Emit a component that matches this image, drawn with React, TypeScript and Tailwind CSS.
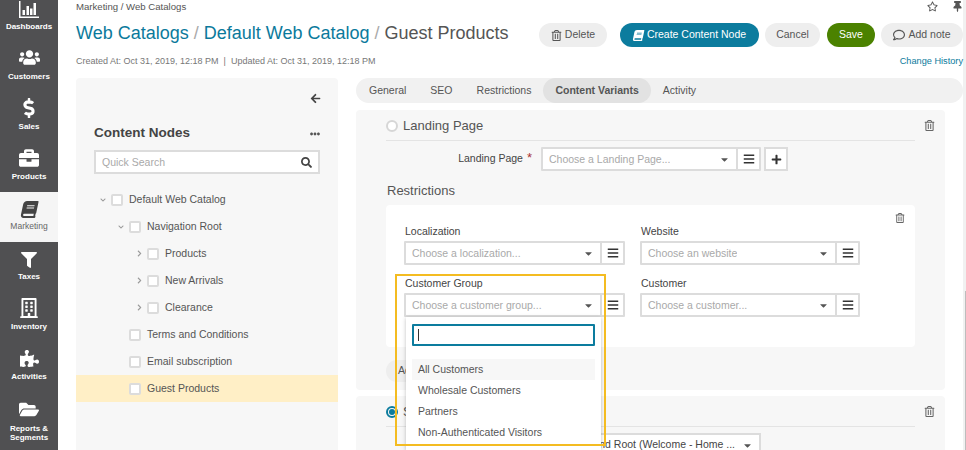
import React from "react";
import {
  FaArrowLeft,
  FaBars,
  FaBook,
  FaBriefcase,
  FaCaretDown,
  FaChevronDown,
  FaChevronRight,
  FaDollarSign,
  FaEllipsisH,
  FaFilter,
  FaFolderOpen,
  FaPlus,
  FaPuzzlePiece,
  FaRegBuilding,
  FaRegComment,
  FaRegStar,
  FaRegTrashAlt,
  FaSearch,
  FaThumbtack,
  FaUsers,
} from "react-icons/fa";

const ChartIcon = ({ className }: { className?: string }) => (
  <svg viewBox="0 0 20 17" fill="currentColor" className={className}>
    <path d="M0 0h1.5v15.5H20V17H0z" />
    <path d="M3.5 9H6v5H3.5zM7.5 5H10v9H7.5zM11 7.5h2.5V14H11zM14.5 2H17v12h-2.5z" />
  </svg>
);

const BookIcon = ({ className }: { className?: string }) => <FaBook className={`-skew-x-12 ${className}`} />;

const navItems = [
  { label: "Dashboards", icon: ChartIcon, size: "w-5 h-[17px]" },
  { label: "Customers", icon: FaUsers, size: "text-[21px]" },
  { label: "Sales", icon: FaDollarSign, size: "text-[20px]" },
  { label: "Products", icon: FaBriefcase, size: "text-[20px]" },
  { label: "Marketing", icon: BookIcon, size: "text-[17px] text-[#444]", active: true },
  { label: "Taxes", icon: FaFilter, size: "text-[16px]" },
  { label: "Inventory", icon: FaRegBuilding, size: "text-[20px]" },
  { label: "Activities", icon: FaPuzzlePiece, size: "text-[19px]" },
];

const treeRows = [
  { label: "Default Web Catalog", indent: "pl-[35px]", arrow: "down" },
  { label: "Navigation Root", indent: "pl-[53px]", arrow: "down" },
  { label: "Products", indent: "pl-[71px]", arrow: "right" },
  { label: "New Arrivals", indent: "pl-[71px]", arrow: "right" },
  { label: "Clearance", indent: "pl-[71px]", arrow: "right" },
  { label: "Terms and Conditions", indent: "pl-[53px]" },
  { label: "Email subscription", indent: "pl-[53px]" },
  { label: "Guest Products", indent: "pl-[53px]", selected: true },
];

const tabs = ["General", "SEO", "Restrictions", "Content Variants", "Activity"];
const groups = ["All Customers", "Wholesale Customers", "Partners", "Non-Authenticated Visitors"];

const Sidebar = () => (
  <aside className="w-[58px] shrink-0 bg-[#505052] text-white -mt-2 h-[458px] overflow-hidden">
    {navItems.map((item) => {
      const Icon = item.icon;
      return (
        <div
          key={item.label}
          className={`h-[50px] flex flex-col items-center justify-end pb-[10px] ${item.active ? "bg-[#f5f5f5]" : ""}`}
        >
          <Icon className={`${item.size} mb-[3px]`} />
          <span className={`leading-[11px] ${item.active ? "text-[8.5px] text-[#666]" : "text-[8px] font-bold"}`}>{item.label}</span>
        </div>
      );
    })}
    <div className="h-[50px] flex flex-col items-center pt-[8px]">
      <FaFolderOpen className="text-[20px] mb-[5px]" />
      <span className="text-[8px] leading-[9px] font-bold text-center">
        Reports &amp;
        <br />
        Segments
      </span>
    </div>
  </aside>
);

const Select = ({ placeholder, width }: { placeholder: string; width: string }) => (
  <div className={`${width} h-6 flex bg-[#dcdcdc] p-[2px] gap-[2px] rounded-[1px]`}>
    <div className="flex-1 min-w-0 bg-white flex items-center justify-between px-[6px]">
      <span className="pt-px text-[10.5px] text-[#a9a9a9] truncate">{placeholder}</span>
      <FaCaretDown className="text-[11px] text-[#555] shrink-0" />
    </div>
    <div className="w-[21px] bg-white flex items-center justify-center">
      <FaBars className="text-[12px] text-[#333]" />
    </div>
  </div>
);

const Check = () => <span className="w-3 h-3 border-2 border-[#dcdcdc] bg-white rounded-[2px] shrink-0" />;

const Button = ({ children, className }: { children: React.ReactNode; className: string }) => (
  <button className={`h-6 rounded-full flex items-center justify-center gap-[3px] text-[10.5px] ${className}`}>{children}</button>
);

export default function App() {
  return (
    <div className="relative w-[966px] h-[450px] overflow-hidden flex bg-white text-[#444] [font-family:'Liberation_Sans',Arial,sans-serif]">
      <Sidebar />

      <main className="flex-1 min-w-0 flex flex-col pl-[18px] border-r-[3px] border-[#f1f1f1]">
        <div className="h-[14px] shrink-0 flex items-start justify-between">
          <span className="text-[9.6px] leading-[14px] text-[#555]">Marketing / Web Catalogs</span>
          <div className="flex items-center gap-[14px] text-[11px] text-[#555] pt-[1px]">
            <FaRegStar />
            <FaThumbtack />
          </div>
        </div>

        <div className="h-[40px] shrink-0 flex items-center mt-[1px]">
          <h1 className="w-[463px] shrink-0 -mt-[4px] text-[18px] leading-[24px] text-[#0b7a9c] whitespace-nowrap">
            Web Catalogs <span className="text-[#aaa]">/</span> Default Web Catalog <span className="text-[#aaa]">/</span>{" "}
            <span className="text-[#555]">Guest Products</span>
          </h1>
          <div className="flex items-center">
            <Button className="w-[68px] bg-[#eeeeee] text-[#555]">
              <FaRegTrashAlt className="text-[11px]" />
              Delete
            </Button>
            <Button className="w-[139px] ml-[13px] bg-[#0c7c9e] text-white">
              <FaBook className="text-[11px] -skew-x-12" />
              Create Content Node
            </Button>
            <Button className="w-[55px] ml-[6px] bg-[#eeeeee] text-[#555]">Cancel</Button>
            <Button className="w-[48px] ml-[7px] bg-[#4b8200] text-white">Save</Button>
            <Button className="w-[82px] ml-[6px] bg-[#eeeeee] text-[#555]">
              <FaRegComment className="text-[12px]" />
              Add note
            </Button>
          </div>
        </div>

        <div className="h-[14px] shrink-0 flex items-center justify-between">
          <span className="text-[9px] text-[#777]">
            Created At: Oct 31, 2019, 12:18 PM &nbsp;|&nbsp; Updated At: Oct 31, 2019, 12:18 PM
          </span>
          <a className="text-[9.2px] text-[#0b7a9c]">Change History</a>
        </div>

        <div className="h-[372px] shrink-0 flex gap-[18px] mt-[9px]">
          <section className="w-[262px] shrink-0 bg-[#f7f7f7] rounded-t-[4px]">
            <div className="h-[41px] flex justify-end items-center pr-[17px]">
              <FaArrowLeft className="text-[11px] text-[#444]" />
            </div>
            <div className="flex items-center justify-between px-[18px] pt-px h-[28px]">
              <h2 className="text-[13.5px] font-bold text-[#444]">Content Nodes</h2>
              <FaEllipsisH className="text-[10px] text-[#555]" />
            </div>
            <div className="mx-[18px] mt-[3px] h-6 border-2 border-[#dcdcdc] bg-white flex items-center justify-between px-[6px]">
              <span className="pt-px text-[10.5px] text-[#a9a9a9]">Quick Search</span>
              <FaSearch className="text-[11px] text-[#444]" />
            </div>
            <div className="mt-[12px]">
              {treeRows.map((row) => (
                <div key={row.label} className={`h-[27px] flex items-center ${row.indent} ${row.selected ? "bg-[#ffefc6]" : ""}`}>
                  {row.arrow && (
                    <span className="w-[11px] -ml-[11px] text-[#999] flex">
                      {row.arrow === "down" ? <FaChevronDown className="text-[6px]" /> : <FaChevronRight className="text-[7px]" />}
                    </span>
                  )}
                  <Check />
                  <span className="ml-[6px] text-[10.5px] text-[#555] whitespace-nowrap">{row.label}</span>
                </div>
              ))}
            </div>
          </section>

          <section className="flex-1 min-w-0">
            <nav className="h-[25px] rounded-full bg-[#f1f1f1] flex items-center pl-px text-[10.5px] text-[#555]">
              {tabs.map((tab) => (
                <span
                  key={tab}
                  className={`h-full flex items-center px-3 rounded-full ${tab === "Content Variants" ? "bg-[#e2e2e2] font-bold" : ""}`}
                >
                  {tab}
                </span>
              ))}
            </nav>

            <div className="mt-[7px] w-[589px] h-[280px] bg-[#f7f7f7] rounded-[4px] px-[30px] relative">
              <FaRegTrashAlt className="absolute right-[10px] top-[10px] text-[11px] text-[#666]" />
              <div className="h-[31px] pt-[1px] border-b border-[#e4e4e4] flex items-center gap-[5px]">
                <span className="w-3 h-3 shrink-0 rounded-full bg-white border-2 border-[#d6d6d6]" />
                <span className="text-[13px] text-[#555]">Landing Page</span>
              </div>
              <div className="flex items-center mt-[6px]">
                <span className="w-[146px] flex justify-end text-[10.5px] text-[#444]">
                  Landing Page
                  <span className="ml-[4px] text-[#a33] text-[13px] leading-[14px]">*</span>
                </span>
                <div className="ml-[9px]">
                  <Select placeholder="Choose a Landing Page..." width="w-[220px]" />
                </div>
                <div className="ml-[3px] w-6 h-6 border-2 border-[#dcdcdc] bg-white flex items-center justify-center">
                  <FaPlus className="text-[11px] text-[#333]" />
                </div>
              </div>
              <h3 className="text-[13px] text-[#555] mt-[11px] pl-px leading-[18px]">Restrictions</h3>
              <div className="mt-[5px] h-[142px] bg-white rounded-[4px] px-[18px] pt-[19px] relative">
                <FaRegTrashAlt className="absolute right-[10px] top-[8px] text-[10px] text-[#666]" />
                <div className="grid grid-cols-[221px_220px] gap-x-[15px] gap-y-[11px]">
                  {[
                    ["Localization", "Choose a localization..."],
                    ["Website", "Choose an website"],
                    ["Customer Group", "Choose a customer group..."],
                    ["Customer", "Choose a customer..."],
                  ].map(([label, placeholder]) => (
                    <div key={label}>
                      <div className="text-[10.5px] leading-[14px] text-[#444] mb-[3px] h-[14px] pl-px">{label}</div>
                      <Select placeholder={placeholder} width="w-full" />
                    </div>
                  ))}
                </div>
              </div>
              <button className="mt-[13px] h-[22px] px-3 rounded-full bg-[#eeeeee] text-[10.5px] text-[#555]">Add</button>
            </div>

            <div className="mt-[6px] w-[589px] h-[100px] bg-[#f7f7f7] rounded-[4px] px-[30px] relative">
              <FaRegTrashAlt className="absolute right-[10px] top-[10px] text-[11px] text-[#666]" />
              <div className="h-[31px] pt-[1px] border-b border-[#e4e4e4] flex items-center gap-[5px]">
                <span className="w-3 h-3 shrink-0 rounded-full border-2 border-[#0c7c9e] flex items-center justify-center">
                  <span className="w-[6px] h-[6px] rounded-full bg-[#0c7c9e]" />
                </span>
                <span className="text-[13px] text-[#555]">System Page</span>
              </div>
              <div className="ml-[155px] mt-[6px] w-[220px] h-6 bg-[#dcdcdc] p-[2px]">
                <div className="h-full bg-white flex items-center justify-end gap-[7px] pr-[6px] overflow-hidden">
                  <span className="text-[10.5px] text-[#444] whitespace-nowrap">Expand Root (Welcome - Home ...</span>
                  <FaCaretDown className="text-[11px] text-[#555] shrink-0" />
                </div>
              </div>
            </div>
          </section>
        </div>
      </main>

      {/* open customer group dropdown with the highlight frame on top */}
      <div className="absolute left-[406px] top-[317px] w-[195px] h-[133px] bg-white shadow-[0_1px_4px_rgba(0,0,0,0.25)] px-[6px] pt-[7px]">
        <div className="h-[22px] border-2 border-[#0c7c9e] rounded-[1px] flex items-center pl-[4px]">
          <span className="w-px h-[12px] bg-[#333]" />
        </div>
        <ul className="mt-[13px] text-[10.5px] text-[#555]">
          {groups.map((group, i) => (
            <li key={group} className={`h-[21px] flex items-center pl-[6px] ${i === 0 ? "bg-[#f7f7f7]" : ""}`}>
              {group}
            </li>
          ))}
        </ul>
      </div>
      <div className="absolute left-[395px] top-[274px] w-[211px] h-[172px] border-2 border-[#f4bc21] pointer-events-none" />
      {/* scrollbar thumb */}
      <div className="absolute right-0 top-[291px] w-px h-[159px] bg-[#bdbdbd]" />
    </div>
  );
}
